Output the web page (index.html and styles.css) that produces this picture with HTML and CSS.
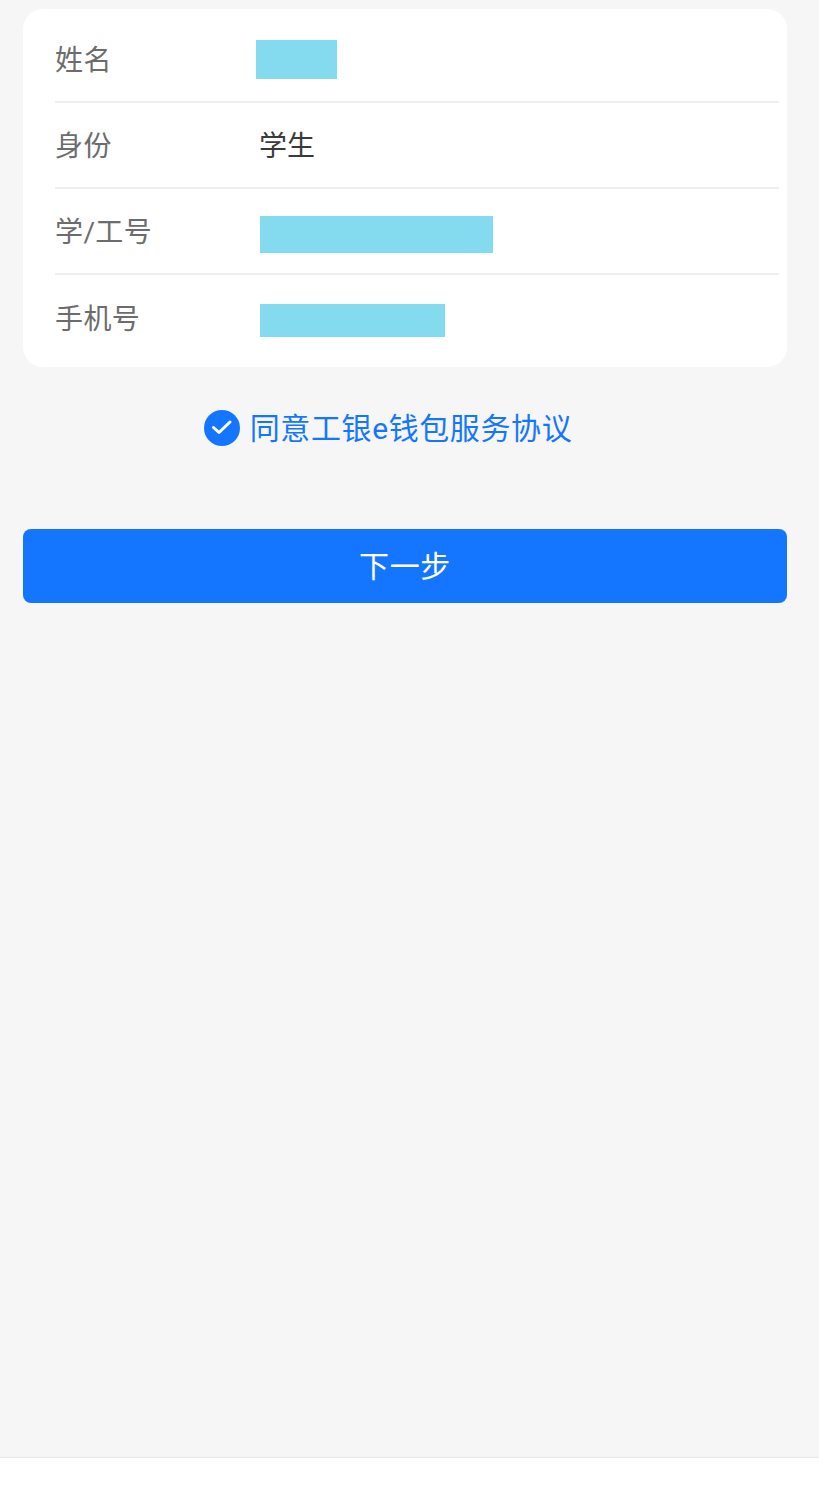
FILE: index.html
```html
<!DOCTYPE html>
<html lang="zh-CN">
<head>
    <meta charset="UTF-8">
    <meta name="viewport" content="width=device-width, initial-scale=1.0">
    <title>下一步</title>
    <link rel="stylesheet" href="styles.css">
</head>
<body>
    <div class="page">
        <div class="content">
            <div class="info-card">
                <div class="info-row">
                    <div class="info-label">姓名</div>
                    <div class="info-value"><div class="mask mask-name"></div></div>
                </div>
                <div class="info-row">
                    <div class="info-label">身份</div>
                    <div class="info-value value-text">学生</div>
                </div>
                <div class="info-row">
                    <div class="info-label">学/工号</div>
                    <div class="info-value"><div class="mask mask-id"></div></div>
                </div>
                <div class="info-row">
                    <div class="info-label">手机号</div>
                    <div class="info-value"><div class="mask mask-phone"></div></div>
                </div>
            </div>

            <div class="agreement">
                <svg class="check-icon" viewBox="0 0 36 36">
                    <circle cx="18" cy="18" r="18" fill="#1476ff"/>
                    <path d="M9.5 17.5l5.5 5L26 12" fill="none" stroke="#fff" stroke-width="3" stroke-linecap="round" stroke-linejoin="round"/>
                </svg>
                <span class="agreement-text">同意工银e钱包服务协议</span>
            </div>

            <button class="btn" type="button">下一步</button>
        </div>
        <div class="bottom-bar"></div>
    </div>
</body>
</html>
```

FILE: styles.css
```css
* {
    margin: 0;
    padding: 0;
    box-sizing: border-box;
    font-family: Roboto, 'Noto Sans CJK SC', sans-serif;
}

body {
    background-color: #f6f6f6;
}

.page {
    height: 1511px;
    display: flex;
    flex-direction: column;
    justify-content: space-between;
}

.content {
    padding: 9px 32px 0 23px;
}

.info-card {
    background: white;
    border-radius: 20px;
    padding: 8px 8px 6px 32px;
}

.info-row {
    height: 86px;
    display: flex;
    align-items: center;
    border-bottom: 2px solid #eeeeee;
    font-size: 28px;
}

.info-row:last-child {
    border-bottom: none;
}

.info-label {
    width: 205px;
    padding-bottom: 2px;
    color: #6c6c6c;
    letter-spacing: 0.4px;
}

.info-value {
    color: #3a3a3a;
    padding-bottom: 2px;
}

.value-text {
    margin-left: -1px;
}

.mask {
    background: #84dbf0;
}

.mask-name {
    width: 81px;
    height: 39px;
    margin-left: -4px;
    margin-top: 2px;
}

.mask-id {
    width: 233px;
    height: 37px;
    margin-top: 8px;
}

.mask-phone {
    width: 185px;
    height: 33px;
    margin-top: 6px;
}

.agreement {
    display: flex;
    align-items: center;
    justify-content: center;
    gap: 10px;
    margin-top: 43px;
    height: 36px;
    padding-right: 34px;
}

.check-icon {
    width: 36px;
    height: 36px;
}

.agreement-text {
    color: #1476ff;
    font-size: 30px;
    letter-spacing: 0.6px;
    padding-bottom: 4px;
}

.btn {
    display: block;
    width: 100%;
    height: 74px;
    margin-top: 83px;
    padding-bottom: 4px;
    background: #1476ff;
    color: white;
    border: none;
    border-radius: 8px;
    font-size: 30px;
    letter-spacing: 0.6px;
}

.bottom-bar {
    height: 54px;
    background: white;
    border-top: 1px solid #e8e8e8;
}
```
